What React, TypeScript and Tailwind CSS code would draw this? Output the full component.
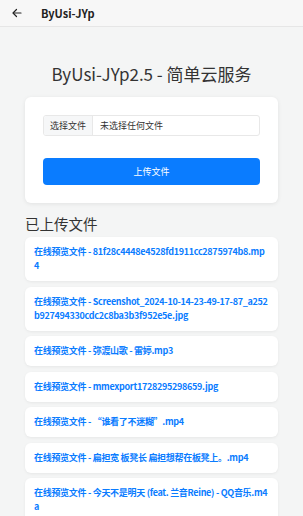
import React from 'react'

const files = [
  '81f28c4448e4528fd1911cc2875974b8.mp4',
  'Screenshot_2024-10-14-23-49-17-87_a252b927494330cdc2c8ba3b3f952e5e.jpg',
  '弥渡山歌 - 雷婷.mp3',
  'mmexport1728295298659.jpg',
  '“谁看了不迷糊”.mp4',
  '扁担宽 板凳长 扁担想帮在板凳上。.mp4',
  '今天不是明天 (feat. 兰音Reine) - QQ音乐.m4a',
]

const App: React.FC = () => {
  return (
    <div className="min-h-[516px] bg-[#f4f5f5] font-['Noto_Sans_CJK_SC',sans-serif] text-[#333]">
      <header className="flex h-[27px] items-center border-b border-[#e6e6e6] bg-[#f7f7f7] px-[11px]">
        <svg width="12" height="12" viewBox="0 0 24 24" fill="none" stroke="#222" strokeWidth="2.4" strokeLinecap="round" strokeLinejoin="round">
          <path d="M20 12H5" />
          <path d="M11 5l-7 7 7 7" />
        </svg>
        <span className="ml-[18px] text-[11px] font-bold text-[#222]">ByUsi-JYp</span>
      </header>

      <main className="px-[25px] pt-[35px] pb-4">
        <h1 className="text-center text-[17px] leading-[24px] text-[#333]">ByUsi-JYp2.5 - 简单云服务</h1>

        <div className="mt-[11px] rounded-[6px] bg-white px-[18px] py-[18px] shadow-[0_1px_4px_rgba(0,0,0,0.08)]">
          <div className="flex h-[21px] items-stretch overflow-hidden rounded-[3px] border border-[#e8e8e8] text-[9px]">
            <span className="flex w-[49px] items-center justify-center border-r border-[#e8e8e8] bg-[#f6f7f8] text-[#333]">选择文件</span>
            <span className="flex items-center pl-[7px] text-[#333]">未选择任何文件</span>
          </div>
          <button className="mt-[22px] flex h-[27px] w-full items-center justify-center rounded-[4px] bg-[#0a7cff] text-[9px] text-white">
            上传文件
          </button>
        </div>

        <h2 className="mt-[10px] text-[14.5px] leading-[22px] text-[#333]">已上传文件</h2>

        <ul className="mt-[2px] flex flex-col gap-[5.5px]">
          {files.map((f) => (
            <li key={f} className="rounded-[6px] bg-white px-[9px] py-[8px] shadow-[0_1px_3px_rgba(0,0,0,0.06)]">
              <a className="block break-all text-[9px] font-bold leading-[14px] tracking-[-0.3px] text-[#0a7cff]">
                在线预览文件 - {f}
              </a>
            </li>
          ))}
        </ul>
      </main>
    </div>
  )
}

export default App
